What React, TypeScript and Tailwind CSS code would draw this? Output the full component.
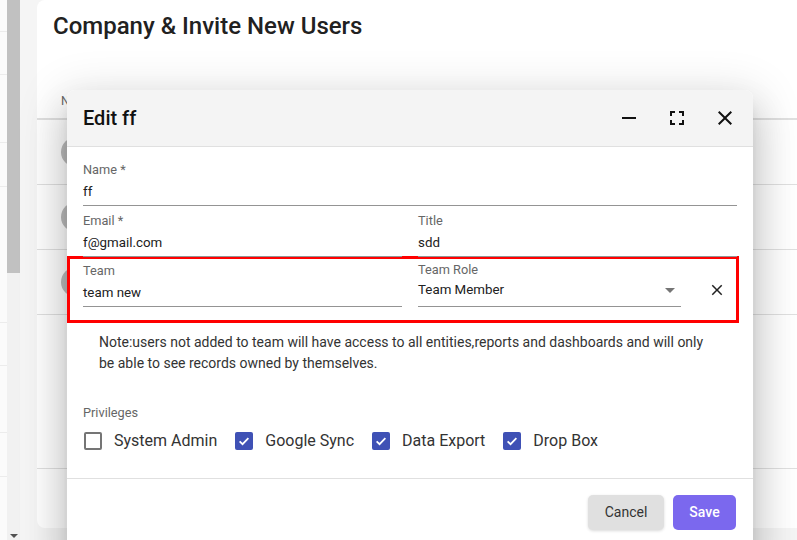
import React from 'react';

const font = { fontFamily: 'Roboto, "Liberation Sans", sans-serif' };

function MuiIcon({ d, size = 24, className = '' }: { d: string; size?: number; className?: string }) {
  return (
    <svg width={size} height={size} viewBox="0 0 24 24" className={className} fill="currentColor">
      <path d={d} />
    </svg>
  );
}

const ICONS = {
  remove: 'M19 13H5v-2h14v2z',
  fullscreen: 'M7 14H5v5h5v-2H7v-3zm-2-4h2V7h3V5H5v5zm12 7h-3v2h5v-5h-2v3zM14 5v2h3v3h2V5h-5z',
  close: 'M19 6.41 17.59 5 12 10.59 6.41 5 5 6.41 10.59 12 5 17.59 6.41 19 12 13.41 17.59 19 19 17.59 13.41 12z',
  drop: 'M7 10l5 5 5-5z',
};

function Field({ label, value, className = '' }: { label: string; value: string; className?: string }) {
  return (
    <div className={className}>
      <div className="text-[12.75px] leading-[14px] text-[#666]">{label}</div>
      <div className="h-[29px] pt-[2px] flex items-center text-[13.33px] text-[#212121] border-b border-[#949494]">{value}</div>
    </div>
  );
}

function Check({ checked, label }: { checked: boolean; label: string }) {
  return (
    <label className="flex items-center gap-3">
      {checked ? (
        <span className="w-[18px] h-[18px] rounded-[2px] bg-[#3f51b5] flex items-center justify-center">
          <svg width="14" height="14" viewBox="0 0 24 24" fill="none" stroke="white" strokeWidth="3">
            <path d="M4.5 12.5l5 5 10-10.5" />
          </svg>
        </span>
      ) : (
        <span className="w-[18px] h-[18px] rounded-[2px] border-2 border-[#757575]" />
      )}
      <span className="text-[16px] text-[#333]">{label}</span>
    </label>
  );
}

export default function App() {
  const rows = [0, 1, 2];
  return (
    <div className="relative w-[797px] h-[540px] overflow-hidden bg-[#f5f5f5] flex" style={font}>
      {/* left edge & scrollbar */}
      <div className="w-[7px] bg-[#fbfbfb] flex flex-col">
        {[32, 43, 68, 44, 136, 43, 67, 44].map((h, i) => (
          <div key={i} className="border-b border-[#ececec]" style={{ height: h }} />
        ))}
      </div>
      <div className="w-[13px] bg-[#f1f1f1] flex flex-col justify-between">
        <div className="h-[273px] bg-[#c1c1c1]" />
        <div className="flex justify-center pb-[2px]">
          <div className="w-0 h-0 border-l-[4px] border-r-[4px] border-t-[4px] border-l-transparent border-r-transparent border-t-[#505050]" />
        </div>
      </div>
      <div className="w-[17px]" />

      {/* background card */}
      <div className="flex-1 h-[528px] bg-white rounded-l-lg flex flex-col">
        <h1 className="pl-4 pt-[10px] text-[24px] leading-[32px] font-medium text-[#212121]">Company &amp; Invite New Users</h1>
        <div className="mt-[42px] h-[36px] border-b-2 border-[#e0e0e0] flex items-center px-6 text-[12px] text-[#666]">Name</div>
        {rows.map((r) => (
          <div key={r} className="h-[65px] border-b border-[#e0e0e0] flex items-center px-6">
            <div className="w-[30px] h-[30px] rounded-full bg-[#bdbdbd]" />
          </div>
        ))}
        <div className="h-[154px] border-b border-[#e0e0e0]" />
      </div>

      {/* modal */}
      <div className="absolute left-[67px] top-[90px] w-[686px] h-[480px] bg-white rounded-t-lg flex flex-col shadow-[0_11px_15px_-7px_rgba(0,0,0,0.2),0_24px_38px_3px_rgba(0,0,0,0.14),0_9px_46px_8px_rgba(0,0,0,0.12)]">
        <div className="h-[57px] bg-[#f4f4f4] rounded-t-lg border-b border-[#e0e0e0] flex items-center pl-4 pr-[16px]">
          <h2 className="flex-1 text-[20px] font-medium text-[#111]">Edit ff</h2>
          <div className="flex items-center gap-6 text-[#111]">
            <MuiIcon d={ICONS.remove} />
            <MuiIcon d={ICONS.fullscreen} />
            <MuiIcon d={ICONS.close} />
          </div>
        </div>

        <div className="px-4 pt-4">
          <Field label="Name *" value="ff" />
          <div className="mt-2 grid grid-cols-2 gap-4">
            <Field label="Email *" value="f@gmail.com" />
            <Field label="Title" value="sdd" />
          </div>
          <div className="-ml-4 -mt-[1px] w-[672px] border-[3px] border-[#ff0000] pl-[13px] pt-1 pb-[13px] flex items-center">
            <Field label="Team" value="team new" className="w-[319px]" />
            <div className="w-[263px] ml-4">
              <div className="text-[12.75px] leading-[14px] text-[#666]">Team Role</div>
              <div className="h-[30px] flex items-center justify-between text-[13.33px] text-[#212121] border-b border-[#949494] pb-[4px]">
                <span>Team Member</span>
                <MuiIcon d={ICONS.drop} className="text-[#757575] -mr-[1px]" />
              </div>
            </div>
            <MuiIcon d={ICONS.close} size={18} className="ml-[27px] mt-[10px] text-[#222]" />
          </div>

          <p className="mt-[9px] pl-4 text-[14px] leading-[21px] text-[#333]">
            Note:users not added to team will have access to all entities,reports and dashboards and will only
            <br />
            be able to see records owned by themselves.
          </p>

          <div className="mt-[32px] text-[12.75px] leading-[14px] text-[#666]">Privileges</div>
          <div className="h-[36px] mt-[3px] pl-[1px] flex items-center gap-[18px]">
            <Check checked={false} label="System Admin" />
            <Check checked label="Google Sync" />
            <Check checked label="Data Export" />
            <Check checked label="Drop Box" />
          </div>
        </div>

        <div className="mt-[19px] border-t border-[#e0e0e0] pt-4 pr-[17px] flex justify-end gap-[9px]">
          <button className="w-[76px] h-[35px] rounded-[5px] bg-[#e0e0e0] text-[14px] text-[#333] shadow-[0_1px_3px_rgba(0,0,0,0.15)]">Cancel</button>
          <button className="w-[63px] h-[35px] rounded-[5px] bg-[#7b68ee] text-[14px] font-medium text-white">Save</button>
        </div>
      </div>
    </div>
  );
}
